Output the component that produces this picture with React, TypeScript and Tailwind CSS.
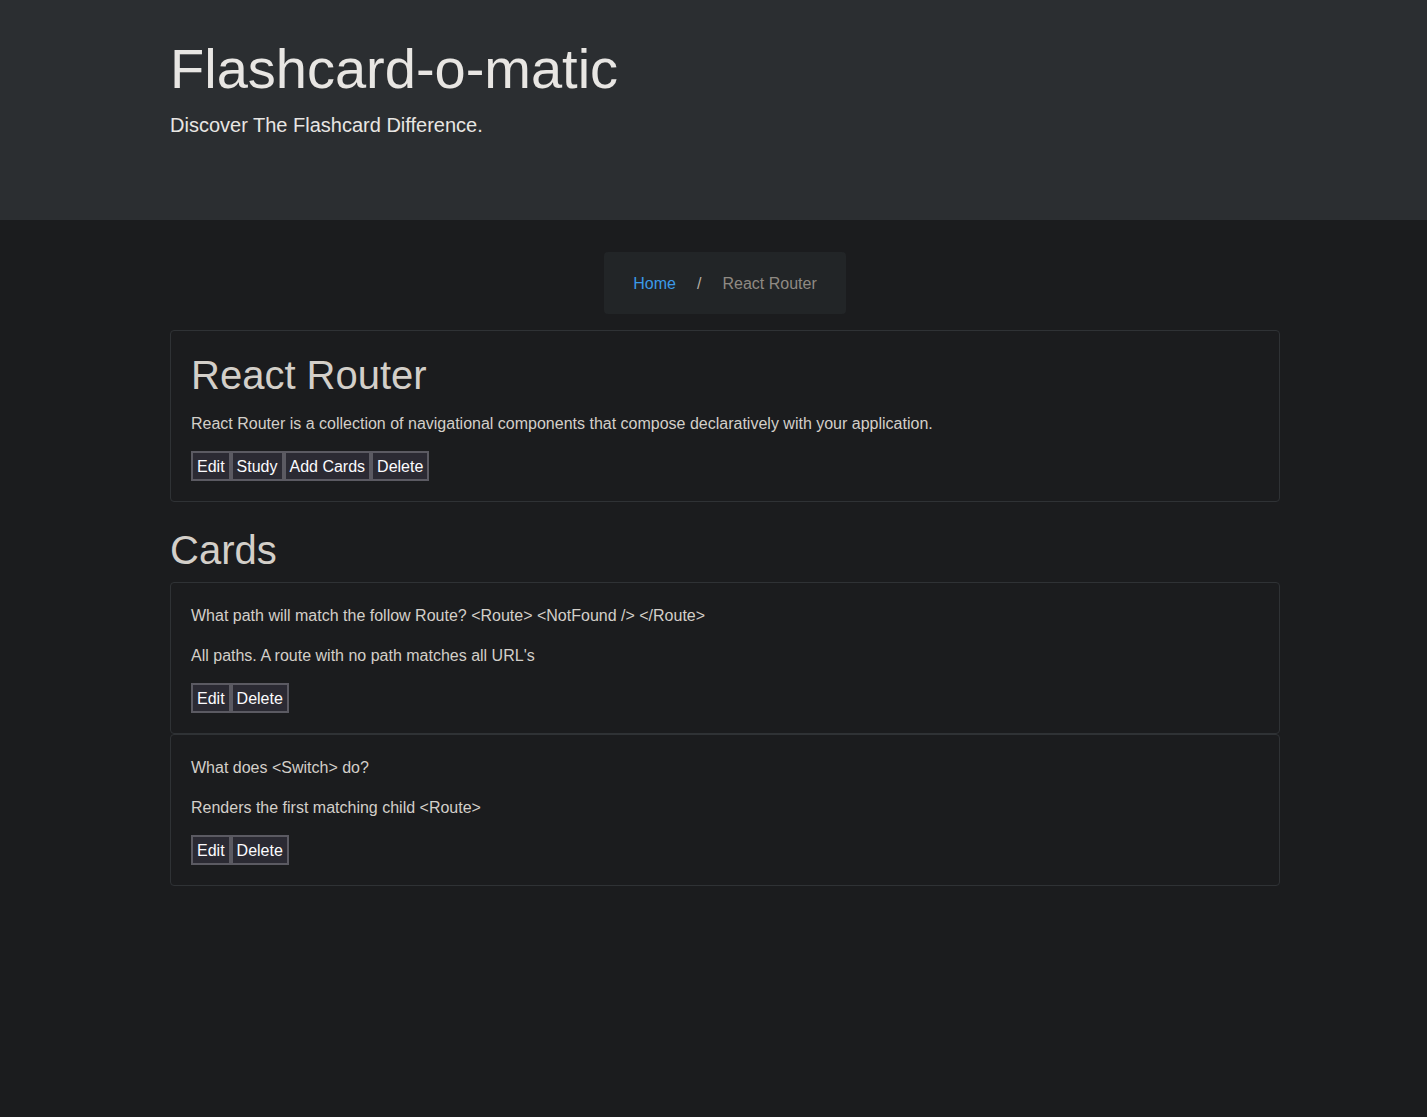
import { ReactNode } from "react";

const FONT = { fontFamily: '"Liberation Sans", Arial, sans-serif' };

interface Card {
  front: string;
  back: string;
}

const cards: Card[] = [
  {
    front: "What path will match the follow Route? <Route> <NotFound /> </Route>",
    back: "All paths. A route with no path matches all URL's",
  },
  {
    front: "What does <Switch> do?",
    back: "Renders the first matching child <Route>",
  },
];

function Btn({ children }: { children: ReactNode }) {
  return (
    <button className="h-[30px] border-2 border-[#5b5a62] bg-[#2b2a33] px-1 pt-px text-base leading-6 text-[#fbfbfe]">
      {children}
    </button>
  );
}

function Panel({ children }: { children: ReactNode }) {
  return (
    <div className="rounded border border-[#2f3235] bg-[#1b1c1e] p-5">
      {children}
    </div>
  );
}

export default function App() {
  return (
    <div className="min-h-[1117px] bg-[#1b1c1e] text-[#d3cfc9]" style={FONT}>
      {/* Jumbotron */}
      <div className="h-[220px] bg-[#2b2e31]">
        <div className="ml-[155px] w-[1140px] px-[15px] pt-[35px]">
          <h1 className="mb-2 text-[56px] leading-[1.2] text-[#e8e6e3]">
            Flashcard-o-matic
          </h1>
          <p className="text-[20px] leading-[30px] text-[#e8e6e3]">
            Discover The Flashcard Difference.
          </p>
        </div>
      </div>

      <div className="ml-[155px] w-[1140px] px-[15px] pt-8">
        {/* Breadcrumb */}
        <div className="flex justify-center">
          <nav className="flex items-center rounded bg-[#222527] px-[29px] pb-[18px] pt-[20px] text-base leading-6">
            <span className="text-[#3b9ae8]">Home</span>
            <span className="px-[21px] text-[#b5afa6]">/</span>
            <span className="text-[#8f8a83]">React Router</span>
          </nav>
        </div>

        {/* Deck */}
        <div className="mt-4">
          <Panel>
            <h1 className="mb-3 text-[40px] leading-[48px] text-[#d3cfc9]">
              React Router
            </h1>
            <p className="mb-4 pt-px text-base leading-6">
              React Router is a collection of navigational components that compose
              declaratively with your application.
            </p>
            <div className="-mt-px flex">
              <Btn>Edit</Btn>
              <Btn>Study</Btn>
              <Btn>Add Cards</Btn>
              <Btn>Delete</Btn>
            </div>
          </Panel>
        </div>

        <h2 className="mb-2 mt-6 text-[40px] leading-[48px] text-[#d3cfc9]">Cards</h2>

        <div className="flex flex-col">
          {cards.map((c) => (
            <Panel key={c.front}>
              <p className="mb-4 pt-px text-base leading-6">{c.front}</p>
              <p className="mb-4 -mt-px pt-px text-base leading-6">{c.back}</p>
              <div className="-mt-px flex">
                <Btn>Edit</Btn>
                <Btn>Delete</Btn>
              </div>
            </Panel>
          ))}
        </div>
      </div>
    </div>
  );
}
